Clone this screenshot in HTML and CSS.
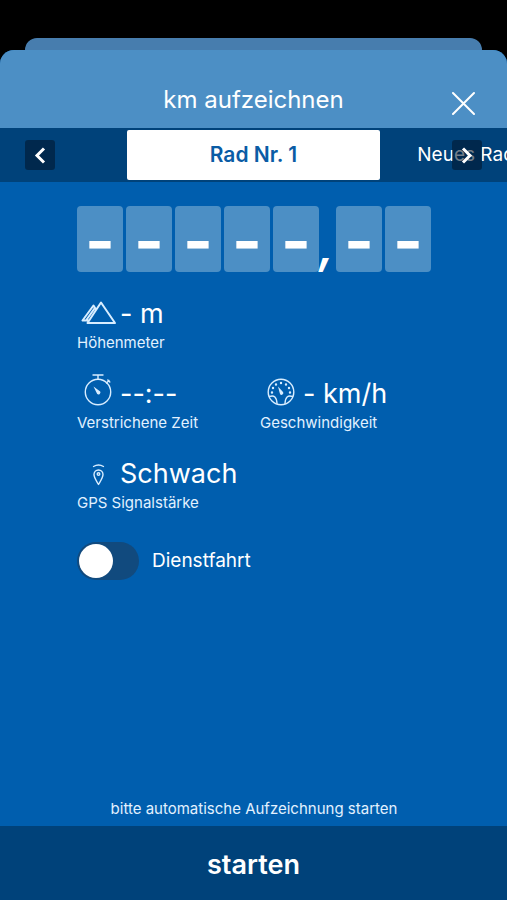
FILE: index.html
```html
<!DOCTYPE html>
<html lang="de">
<head>
<meta charset="utf-8">
<meta name="viewport" content="width=device-width, initial-scale=1">
<title>km aufzeichnen</title>
<link rel="stylesheet" href="styles.css">
</head>
<body>
<div class="back-sheet"></div>
<div class="sheet">
  <header class="header">
    <h1 class="title">km aufzeichnen</h1>
    <button class="close" type="button" aria-label="Schließen">
      <svg width="24" height="24" viewBox="0 0 24 24"><path d="M2 2L23 23M23 2L2 23"/></svg>
    </button>
  </header>

  <nav class="tabs" aria-label="Fahrrad">
    <button class="arrow arrow-prev" type="button" aria-label="Zurück">
      <svg width="30" height="30" viewBox="0 0 30 30"><path d="M19 8.500L12 15.500L19 22.500"/></svg>
    </button>
    <button class="tab tab-active" type="button">Rad Nr. 1</button>
    <button class="tab tab-next" type="button">Neues Rad</button>
    <button class="arrow arrow-next" type="button" aria-label="Weiter">
      <svg width="30" height="30" viewBox="0 0 30 30"><path d="M11 8.500L18 15.500L11 22.500"/></svg>
    </button>
  </nav>

  <main class="content">
    <div class="counter">
      <span class="digit">-</span><span class="digit">-</span><span class="digit">-</span><span class="digit">-</span><span class="digit">-</span>
      <span class="comma">,</span>
      <span class="digit">-</span><span class="digit">-</span>
    </div>

    <dl class="metrics">
      <div class="metric metric-wide">
        <dd class="value">
          <svg class="icon" width="43" height="34" viewBox="0 0 43 34"><path class="thick" d="M24 5.500L38 26H10.500ZM19 12.500L16.500 8.500L5.500 23.500H11.500M9 23.500L17.500 11.500"/></svg>
          <span>- m</span>
        </dd>
        <dt class="label">Höhenmeter</dt>
      </div>
      <div class="metric">
        <dd class="value">
          <svg class="icon" width="43" height="34" viewBox="0 0 43 34"><circle cx="21" cy="15" r="12.700"/><path d="M16 -2H26M21 -2V2M29.500 6L32 3.500M30.800 3L32.800 5"/><path class="solid" d="M16.500 9.500L23.200 14.500A2 2 0 0 1 20.200 17Z"/></svg>
          <span>--:--</span>
        </dd>
        <dt class="label">Verstrichene Zeit</dt>
      </div>
      <div class="metric">
        <dd class="value">
          <svg class="icon" width="43" height="34" viewBox="0 0 43 34"><circle cx="21" cy="15" r="12.800"/><path d="M9.500 19.500Q16.500 17 17 26.500M32.500 19.500Q25.500 17 25 26.500"/><path class="dots" d="M12 15.500V15.490M13 11V10.990M16 7.500V7.490M21 6V5.990M26 7.500V7.490M29 11V10.990M30 15.500V15.490"/><path class="solid" d="M18 9.500L23 15A1.800 1.800 0 0 1 20 17Z"/></svg>
          <span>- km/h</span>
        </dd>
        <dt class="label">Geschwindigkeit</dt>
      </div>
      <div class="metric metric-wide">
        <dd class="value">
          <svg class="icon" width="43" height="34" viewBox="0 0 43 34"><path d="M16.500 9.500Q21.500 6.500 26.500 9.500M21.500 27.500C19.500 24 17 20.500 17 17.500A4.500 4.500 0 0 1 26 17.500C26 20.500 23.500 24 21.500 27.500Z"/><circle cx="21.500" cy="17" r="1.300"/></svg>
          <span>Schwach</span>
        </dd>
        <dt class="label">GPS Signalstärke</dt>
      </div>
    </dl>

    <label class="switch-row">
      <input class="switch" type="checkbox" role="switch">
      <span>Dienstfahrt</span>
    </label>

    <p class="hint">bitte automatische Aufzeichnung starten</p>
  </main>

  <button class="start" type="button">starten</button>
</div>
</body>
</html>
```

FILE: styles.css
```css
* {
  box-sizing: border-box;
}

body {
  display: flex;
  flex-direction: column;
  min-height: 100vh;
  margin: 0;
  padding-top: 38px;
  background: #000;
  color: #fff;
  font-family: Inter, "Liberation Sans", sans-serif;
  overflow-x: hidden;
}

button {
  border: 0;
  padding: 0;
  background: none;
  color: inherit;
  font: inherit;
}

svg {
  display: block;
  fill: none;
  stroke: currentColor;
  stroke-linecap: round;
  stroke-linejoin: round;
}

.back-sheet {
  height: 12px;
  margin: 0 25px;
  border-radius: 12px 12px 0 0;
  background: #477dae;
}

.sheet {
  display: flex;
  flex: 1;
  flex-direction: column;
  border-radius: 14px 14px 0 0;
  background: #005eae;
  overflow: hidden;
}

.header {
  display: grid;
  grid-template-columns: 44px 1fr 44px;
  align-items: center;
  height: 78px;
  padding: 22px 22px 0;
  background: #4c8fc5;
}

.title {
  grid-column: 2;
  margin: 0;
  font-size: 24px;
  font-weight: 400;
  line-height: 32px;
  text-align: center;
}

.close {
  display: flex;
  align-items: center;
  justify-content: center;
  height: 44px;
  padding-top: 6px;
}

.close svg {
  stroke-width: 2;
}

.tabs {
  position: relative;
  display: grid;
  grid-template-columns: 1fr 2fr 1fr;
  height: 54px;
  padding: 2px 0;
  background: #00427a;
}

.tab {
  font-size: 19px;
  line-height: 24px;
  white-space: nowrap;
}

.tab-active {
  grid-column: 2;
  border-radius: 2px;
  background: #fff;
  color: #0a5ca5;
  font-size: 21px;
  font-weight: 600;
}

.tab-next {
  min-width: 0;
  padding-left: 37px;
  text-align: left;
}

.arrow {
  position: absolute;
  top: 12px;
  border-radius: 3px;
  background: rgba(0, 20, 40, 0.55);
}

.arrow svg {
  stroke-width: 3;
  stroke-linecap: butt;
  stroke-linejoin: miter;
}

.arrow-prev {
  left: 25px;
}

.arrow-next {
  right: 25px;
}

.content {
  display: flex;
  flex: 1;
  flex-direction: column;
  padding: 24px 76px 7px 77px;
}

.counter {
  display: flex;
  gap: 3px;
  height: 66px;
  font-weight: 700;
}

.digit {
  flex: 1;
  border-radius: 4px;
  background: #4c8fc5;
  font-size: 64px;
  line-height: 70px;
  text-align: center;
}

.comma {
  width: 14px;
  margin-left: -3px;
  font-size: 48px;
  font-style: italic;
  font-weight: 600;
  line-height: 80px;
}

.metrics {
  display: grid;
  grid-template-columns: 183px 1fr;
  row-gap: 24px;
  margin: 25px 0 0;
}

.metric {
  display: flex;
  flex-direction: column;
}

.metric-wide {
  grid-column: 1 / -1;
}

.value {
  display: flex;
  align-items: center;
  height: 34px;
  margin: 0;
  font-size: 27px;
  line-height: 34px;
  white-space: nowrap;
}

.icon {
  flex: none;
  overflow: visible;
  color: #d8edff;
  stroke-width: 1.4;
}

.icon .thick {
  stroke-width: 2;
}

.icon .solid {
  fill: currentColor;
  stroke: none;
}

.icon .dots {
  stroke-width: 2.4;
}

.label {
  padding-top: 2px;
  color: #e2f1ff;
  font-size: 15px;
  line-height: 20px;
}

.switch-row {
  display: flex;
  align-items: center;
  gap: 13px;
  margin-top: 29px;
  font-size: 19px;
  line-height: 24px;
}

.switch {
  appearance: none;
  width: 62px;
  height: 38px;
  margin: 0;
  padding: 2px;
  border-radius: 19px;
  background: #114a7e;
}

.switch::before {
  content: "";
  display: block;
  width: 34px;
  height: 34px;
  border-radius: 50%;
  background: #fff;
}

.switch:checked::before {
  margin-left: 24px;
}

.hint {
  margin: auto 0 0;
  color: #e2f1ff;
  font-size: 15px;
  line-height: 20px;
  text-align: center;
}

.start {
  height: 74px;
  padding-top: 4px;
  background: #00427a;
  font-size: 27px;
  font-weight: 600;
  line-height: 34px;
}
```
